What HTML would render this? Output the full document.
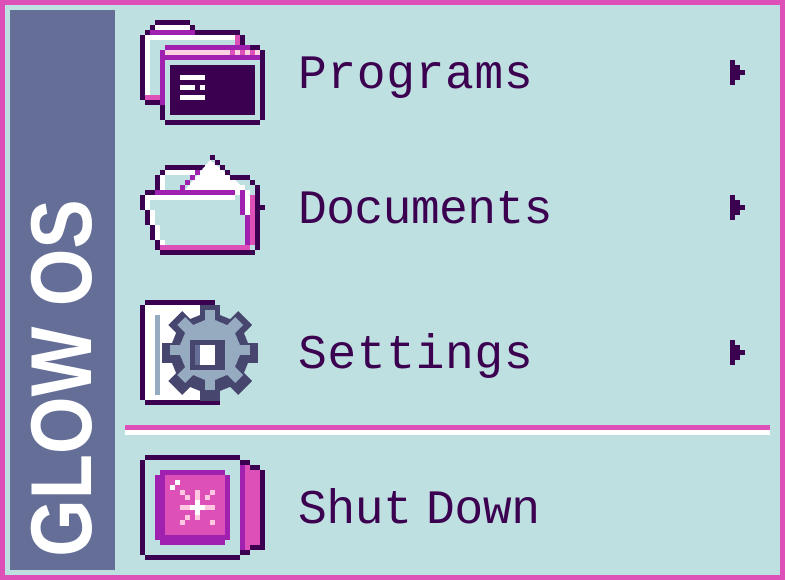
<!DOCTYPE html>
<html><head><style>
html,body{margin:0;padding:0;}
body{width:785px;height:580px;background:#dc50b8;position:relative;overflow:hidden;font-family:"Liberation Mono",monospace;}
.panel{position:absolute;left:5px;top:5px;width:775px;height:570px;background:#bfe0e0;}
.side{position:absolute;left:10px;top:10px;width:105px;height:560px;background:#646e96;}
.vt{position:absolute;left:62px;top:378px;transform:translate(-50%,-50%) rotate(-90deg) scaleX(0.86);color:#fff;font-family:"Liberation Sans",sans-serif;font-weight:bold;font-size:86px;letter-spacing:0px;white-space:nowrap;line-height:1;}
.lbl{position:absolute;left:298px;color:#3c0050;font-size:48px;line-height:1;letter-spacing:0.6px;white-space:nowrap;}
.sep1{position:absolute;left:125px;top:425px;width:645px;height:5px;background:#dc50b8;}
.sep2{position:absolute;left:125px;top:430px;width:645px;height:5px;background:#fff;}
svg{position:absolute;left:0;top:0;}
</style></head><body>
<div class="panel"></div>
<div class="side"></div>
<div class="vt">GLOW OS</div>
<div class="lbl" style="top:52px">Programs</div>
<div class="lbl" style="top:187px;letter-spacing:-0.6px">Documents</div>
<div class="lbl" style="top:332px">Settings</div>
<div class="lbl" style="top:487px;word-spacing:-14px;letter-spacing:-0.4px">Shut Down</div>
<div class="sep1"></div><div class="sep2"></div>
<svg width="785" height="580" viewBox="0 0 785 580" shape-rendering="crispEdges">
<g fill="#3c0050">
<path d="M730 60h5v5h5v5h5v5h-5v5h-5v5h-5z"/>
<path d="M730 195h5v5h5v5h5v5h-5v5h-5v5h-5z"/>
<path d="M730 340h5v5h5v5h5v5h-5v5h-5v5h-5z"/>
</g>
<rect x="155" y="20" width="35" height="5" fill="#3c0050"/>
<rect x="150" y="25" width="5" height="5" fill="#3c0050"/>
<rect x="155" y="25" width="35" height="5" fill="#fff"/>
<rect x="190" y="25" width="5" height="5" fill="#3c0050"/>
<rect x="145" y="30" width="5" height="5" fill="#3c0050"/>
<rect x="150" y="30" width="45" height="5" fill="#a020b0"/>
<rect x="195" y="30" width="45" height="5" fill="#3c0050"/>
<rect x="140" y="35" width="5" height="65" fill="#3c0050"/>
<rect x="145" y="35" width="90" height="5" fill="#fff"/>
<rect x="145" y="40" width="5" height="55" fill="#fff"/>
<rect x="235" y="35" width="5" height="10" fill="#dc50b8"/>
<rect x="240" y="35" width="5" height="10" fill="#3c0050"/>
<rect x="145" y="95" width="15" height="5" fill="#dc50b8"/>
<rect x="145" y="100" width="20" height="5" fill="#3c0050"/>
<rect x="165" y="45" width="85" height="5" fill="#a020b0"/>
<rect x="250" y="45" width="10" height="5" fill="#3c0050"/>
<rect x="160" y="50" width="5" height="55" fill="#a020b0"/>
<rect x="165" y="50" width="95" height="5" fill="#ffd0e0"/>
<rect x="230" y="50" width="5" height="5" fill="#dc50b8"/><rect x="240" y="50" width="5" height="5" fill="#dc50b8"/><rect x="250" y="50" width="5" height="5" fill="#dc50b8"/>
<rect x="165" y="55" width="95" height="5" fill="#a020b0"/>
<rect x="260" y="50" width="5" height="70" fill="#3c0050"/>
<rect x="160" y="105" width="5" height="15" fill="#3c0050"/>
<rect x="165" y="120" width="95" height="5" fill="#3c0050"/>
<rect x="170" y="65" width="85" height="50" fill="#3c0050"/>
<rect x="180" y="75" width="25" height="5" fill="#fff"/>
<rect x="180" y="85" width="15" height="5" fill="#fff"/><rect x="200" y="85" width="5" height="5" fill="#fff"/>
<rect x="180" y="95" width="25" height="5" fill="#fff"/>
<rect x="165" y="165" width="40" height="5" fill="#3c0050"/>
<rect x="160" y="170" width="5" height="5" fill="#3c0050"/>
<rect x="155" y="175" width="5" height="15" fill="#3c0050"/>
<rect x="165" y="170" width="30" height="5" fill="#fff"/>
<rect x="160" y="175" width="5" height="15" fill="#fff"/>
<path d="M185 190L210 160L235 180L245 190L245 195L185 195Z" fill="#fff"/>
<path d="M210 155h5v5h5v5h5v5h5v5h20v5h5v5h5v65h-5V185h-5v-5h-20v-5h-5v-5h-5v-5h-5v-5h-5z" fill="#3c0050"/>
<path d="M195 170h5v5h-5zM190 175h5v5h-5zM185 180h5v5h-5zM180 185h5v5h-5z" fill="#a020b0"/>
<path d="M235 185h10v5h5v5h5v50h-5v-30h-5v-15h-5v-10h-5z" fill="#fff"/>
<rect x="240" y="190" width="5" height="25" fill="#a020b0"/>
<rect x="245" y="215" width="5" height="30" fill="#a020b0"/>
<rect x="250" y="195" width="5" height="50" fill="#dc50b8"/>
<rect x="260" y="205" width="5" height="5" fill="#3c0050"/>
<rect x="145" y="190" width="10" height="5" fill="#3c0050"/>
<rect x="155" y="190" width="80" height="5" fill="#a020b0"/>
<rect x="140" y="195" width="5" height="15" fill="#3c0050"/>
<rect x="145" y="195" width="90" height="5" fill="#fff"/>
<rect x="145" y="200" width="5" height="10" fill="#fff"/>
<rect x="145" y="210" width="5" height="15" fill="#3c0050"/><rect x="150" y="210" width="5" height="15" fill="#fff"/>
<rect x="150" y="225" width="5" height="15" fill="#3c0050"/><rect x="155" y="225" width="5" height="15" fill="#fff"/>
<rect x="155" y="240" width="5" height="10" fill="#3c0050"/><rect x="160" y="240" width="5" height="5" fill="#fff"/>
<rect x="160" y="245" width="90" height="5" fill="#dc50b8"/>
<rect x="160" y="250" width="95" height="5" fill="#3c0050"/>
<rect x="145" y="300" width="70" height="5" fill="#3c0050"/>
<rect x="140" y="305" width="5" height="95" fill="#3c0050"/>
<rect x="145" y="400" width="75" height="5" fill="#3c0050"/>
<rect x="145" y="305" width="55" height="95" fill="#fff"/>
<rect x="155" y="315" width="5" height="80" fill="#96aac0"/>
<g transform="translate(210 355)">
<path fill="#46466e" d="M-10,-50h20v10l10,4 8,-8 14,14 -8,8 4,10h10v20h-10l-4,10 8,8 -14,14 -8,-8 -10,4v10h-20v-10l-10,-4 -8,8 -14,-14 8,-8 -4,-10h-10v-20h10l4,-10 -8,-8 14,-14 8,8 10,-4z"/>
<path fill="#96aac0" d="M-5,-45h10v10l12,5 8,-8 8,8 -8,8 5,12h10v10h-10l-5,12 8,8 -8,8 -8,-8 -12,5v10h-10v-10l-12,-5 -8,8 -8,-8 8,-8 -5,-12h-10v-10h10l5,-12 -8,-8 8,-8 8,8 12,-5z"/>
<rect x="-20" y="-15" width="35" height="30" fill="#46466e"/>
<rect x="-10" y="-10" width="15" height="20" fill="#fff"/>
<rect x="-15" y="-10" width="5" height="20" fill="#646e96"/>
</g>
<rect x="145" y="455" width="95" height="5" fill="#3c0050"/>
<rect x="140" y="460" width="5" height="95" fill="#3c0050"/>
<rect x="145" y="555" width="95" height="5" fill="#3c0050"/>
<rect x="240" y="460" width="10" height="5" fill="#3c0050"/>
<rect x="250" y="465" width="10" height="5" fill="#3c0050"/>
<rect x="260" y="470" width="5" height="80" fill="#3c0050"/>
<rect x="250" y="545" width="10" height="5" fill="#3c0050"/>
<rect x="240" y="550" width="10" height="5" fill="#3c0050"/>
<rect x="240" y="465" width="5" height="85" fill="#a020b0"/>
<rect x="245" y="465" width="5" height="85" fill="#dc50b8"/>
<rect x="250" y="470" width="10" height="75" fill="#dc50b8"/>
<rect x="160" y="470" width="65" height="75" fill="#a020b0"/>
<rect x="155" y="475" width="75" height="65" fill="#a020b0"/>
<rect x="165" y="475" width="60" height="60" fill="#dc50b8"/>
<rect x="175" y="480" width="5" height="5" fill="#fff"/><rect x="170" y="485" width="5" height="5" fill="#fff"/>
<rect x="195" y="490" width="5" height="30" fill="#ffc8e0"/>
<rect x="180" y="505" width="35" height="5" fill="#ffc8e0"/>
<rect x="195" y="500" width="5" height="15" fill="#fff"/>
<rect x="190" y="505" width="15" height="5" fill="#fff"/>
<rect x="180" y="490" width="5" height="5" fill="#ffc8e0"/><rect x="185" y="495" width="5" height="5" fill="#ffc8e0"/>
<rect x="210" y="490" width="5" height="5" fill="#ffc8e0"/><rect x="205" y="495" width="5" height="5" fill="#ffc8e0"/>
<rect x="185" y="515" width="5" height="5" fill="#ffc8e0"/><rect x="180" y="520" width="5" height="5" fill="#ffc8e0"/>
<rect x="210" y="520" width="5" height="5" fill="#ffc8e0"/>
</svg>
</body></html>
